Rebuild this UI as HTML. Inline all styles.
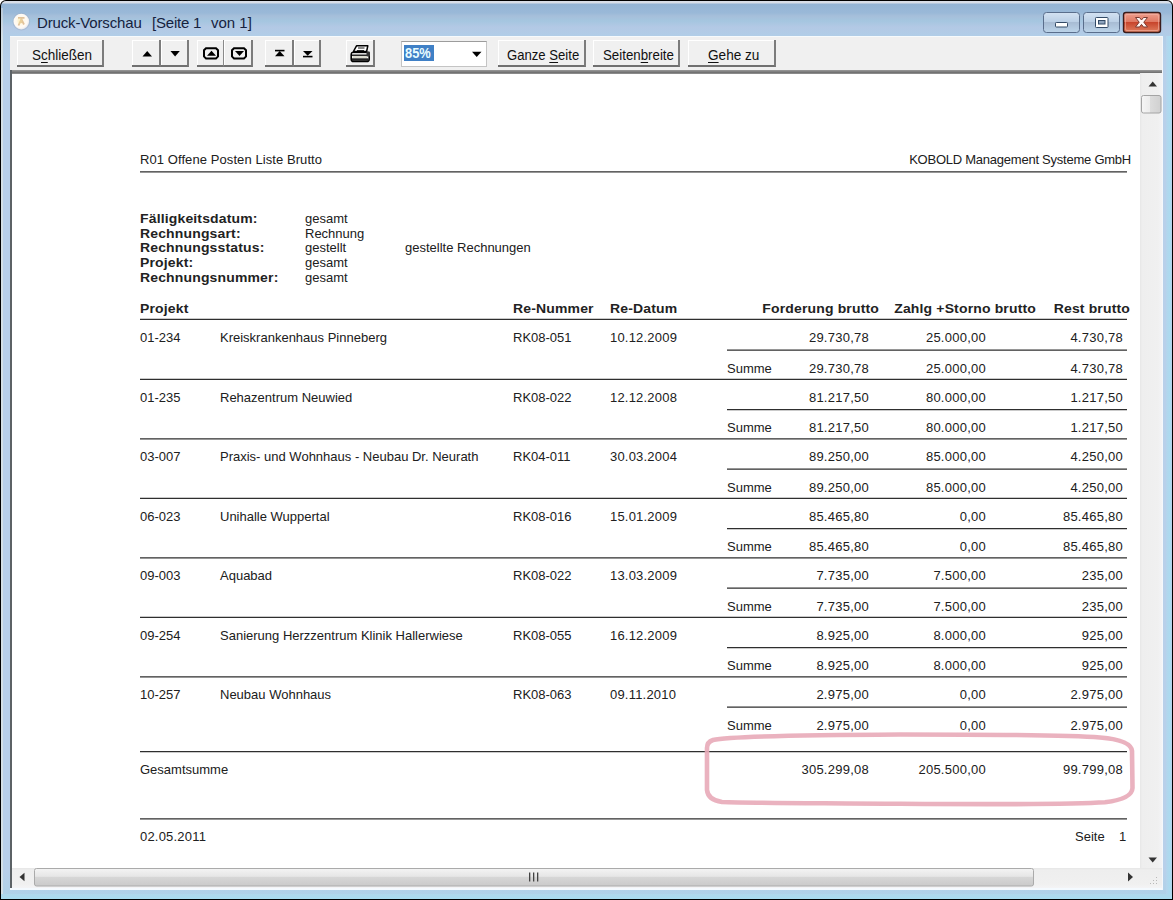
<!DOCTYPE html>
<html><head><meta charset="utf-8">
<style>
*{margin:0;padding:0;box-sizing:border-box}
html,body{width:1173px;height:900px;overflow:hidden;background:#fff}
body{position:relative;font-family:"Liberation Sans",sans-serif}
.a{position:absolute}
#frame{left:0;top:0;width:1173px;height:900px;background:#000;border-radius:6px 6px 0 0}
#frame2{left:1px;top:1px;width:1171px;height:898px;border-radius:5px 5px 0 0;background:linear-gradient(to bottom,#d8dee8 0px,#d8dee8 2px,#94b4d5 3px,#9ab9d8 12px,#a6bfda 15px,#a5c6e0 20px,#b3c9e5 26px,#b1cde7 34px,#b8d0ea 60px,#b8d0ea 870px,#add2e8 900px)}
#lstrip{left:1px;top:8px;width:2px;height:891px;background:linear-gradient(#b8c8d8,#d4e0e6 30px)}
#rstrip{left:1166px;top:36px;width:5px;height:863px;background:linear-gradient(to right,#b4d4ec,#a8dcf0)}
#bstrip{left:1px;top:894px;width:1171px;height:5px;background:linear-gradient(#b0d8ec,#a8dcf0)}
#title{left:37px;top:14px;font-size:15px;color:#16223e;white-space:pre;letter-spacing:-0.15px}
#client{left:10px;top:36px;width:1152px;height:853px;background:#f0f0f0}
#tbtop{left:10px;top:36px;width:1152px;height:1px;background:#f6fafc}
#tbline{left:10px;top:70px;width:1152px;height:3px;background:linear-gradient(#9a9a9a,#6a6a6a)}
#content{left:12px;top:73px;width:1128px;height:795px;background:#fff}
#ctop{left:12px;top:73px;width:1128px;height:1px;background:#8a8a8a}
#leftline{left:10px;top:70px;width:2px;height:818px;background:#5c6266}
#vscroll{left:1140px;top:73px;width:22px;height:795px;background:linear-gradient(to right,#e6e6e6,#eeeeee 2px,#f0f0f0 18px,#f4f4f6)}
#hscroll{left:12px;top:868px;width:1150px;height:20px;background:linear-gradient(#e6e6e6,#eeeeee 2px,#f0f0f0 16px,#f4f4f6)}
#bline{left:10px;top:888px;width:1152px;height:2px;background:#f4faff}
#rline{left:1162px;top:36px;width:1px;height:854px;background:#f4f8fc}
.btn{position:absolute;background:#f0f0f0;border-right:2px solid #7c7c7c;border-bottom:2px solid #707070;box-shadow:inset 1px 1px 0 #fff}
.bt{position:absolute;font-size:14px;color:#111;white-space:pre;line-height:16px;transform-origin:0 0}
.u{text-decoration:underline;text-underline-offset:2px}
.r{position:absolute;font-size:13px;color:#202020;white-space:pre;line-height:15px}
.b{font-weight:bold;font-size:13px;letter-spacing:0.15px;color:#222;transform:scaleX(1.075);transform-origin:0 0}
.b.n{transform-origin:100% 0}
.hl{position:absolute;height:1px;background:#2a2a2a}
.n{text-align:right}
</style></head><body>
<div id="frame" class="a"></div>
<div id="frame2" class="a"></div>
<div id="lstrip" class="a"></div>
<div id="rstrip" class="a"></div>
<div id="bstrip" class="a"></div>
<div id="title" class="a">Druck-Vorschau</div>
<div class="a" style="left:152px;top:14px;font-size:15px;color:#16223e;white-space:pre;letter-spacing:-0.2px">[Seite 1</div>
<div class="a" style="left:211px;top:14px;font-size:15px;color:#16223e;white-space:pre;letter-spacing:0px">von 1]</div>
<div id="client" class="a"></div>
<div id="tbtop" class="a"></div>
<div id="rline" class="a"></div>
<div id="tbline" class="a"></div>
<div id="content" class="a"></div>
<div id="ctop" class="a"></div>
<div id="leftline" class="a"></div>
<div id="vscroll" class="a"></div>
<div id="hscroll" class="a"></div>
<div id="bline" class="a"></div>

<div class="btn" style="left:17px;top:40px;width:87px;height:27px"></div>
<div class="bt" style="left:32px;top:47px;transform:scaleX(.965)">S<span class="u">c</span>hließen</div>
<div class="btn" style="left:132px;top:40px;width:29px;height:27px"></div>
<div class="btn" style="left:161px;top:40px;width:28px;height:27px"></div>
<div class="btn" style="left:197px;top:40px;width:27px;height:27px;border-right:1px solid #8a8a8a"></div>
<div class="btn" style="left:224px;top:40px;width:29px;height:27px"></div>
<div class="btn" style="left:265px;top:40px;width:29px;height:27px"></div>
<div class="btn" style="left:294px;top:40px;width:27px;height:27px"></div>
<div class="btn" style="left:346px;top:40px;width:29px;height:27px"></div>
<div class="a" style="left:401px;top:41px;width:86px;height:26px;background:#fff;border:1px solid #c4c4c4;border-top-color:#9c9c9c"></div>
<div class="a" style="left:404px;top:45px;width:30px;height:16px;background:#3f80c6"></div>
<div class="bt" style="left:405px;top:45px;color:#e8fcff;font-weight:bold;transform:scaleX(.92)">85%</div>
<div class="btn" style="left:498px;top:40px;width:88px;height:27px"></div>
<div class="bt" style="left:507px;top:47px;transform:scaleX(.937)">Ganze <span class="u">S</span>eite</div>
<div class="btn" style="left:593px;top:40px;width:87px;height:27px"></div>
<div class="bt" style="left:603px;top:47px;transform:scaleX(.949)">Seiten<span class="u">b</span>reite</div>
<div class="btn" style="left:688px;top:40px;width:88px;height:27px"></div>
<div class="bt" style="left:708px;top:47px;transform:scaleX(.972)"><span class="u">G</span>ehe zu</div>
<svg class="a" style="left:0;top:0" width="1173" height="900" viewBox="0 0 1173 900">
<g fill="#000">
<polygon points="142.5,56.5 147.2,51 152,56.5"/>
<polygon points="170.5,51 179.8,51 175.1,56.5"/>
<polygon points="207,55.8 211.5,50.8 216,55.8"/>
<polygon points="235,51 244,51 239.5,56"/>
<rect x="275" y="49.8" width="9.5" height="1.6"/>
<polygon points="275,56.2 279.7,51 284.5,56.2"/>
<rect x="303" y="55.8" width="9.5" height="1.6"/>
<polygon points="303,51 312.5,51 307.7,55.8"/>
<polygon points="472,51.8 481.5,51.8 476.7,57"/>
</g>
<g fill="none" stroke="#000" stroke-width="2">
<path d="M206,48.2 H216 L218,50.2 V56.4 L216,58.4 H206 L204,56.4 V50.2 Z"/>
<path d="M234,48.2 H244 L246,50.2 V56.4 L244,58.4 H234 L232,56.4 V50.2 Z"/>
</g>
<g>
<path d="M356.5,45.8 H367.8 L366.6,51.5 H353.4 Z" fill="#fff" stroke="#000" stroke-width="1.5" stroke-linejoin="round"/>
<rect x="358" y="47.2" width="6.5" height="1.6" fill="#707070"/>
<rect x="357" y="50.2" width="7" height="1.4" fill="#000"/>
<rect x="351.2" y="52.2" width="18" height="9.3" rx="2.6" fill="#fff" stroke="#000" stroke-width="1.6"/>
<rect x="352.2" y="53.2" width="16" height="1.4" fill="#d0d0d0"/>
<rect x="352" y="54.6" width="16.5" height="1.3" fill="#111"/>
<rect x="352.6" y="56" width="14.5" height="2.2" fill="#dcdcd0"/>
<rect x="352" y="58.3" width="16.5" height="2.6" fill="#222"/>
<rect x="366.5" y="51.5" width="3.5" height="5" rx="1" fill="#333"/>
</g>
</svg>

<div class="r" style="left:140px;top:152.0px;letter-spacing:0.08px">R01 Offene Posten Liste Brutto</div>
<div class="r n" style="left:731px;width:400px;top:152.0px;letter-spacing:-0.24px">KOBOLD Management Systeme GmbH</div>
<div class="r b" style="left:140px;top:210.7px">Fälligkeitsdatum:</div>
<div class="r" style="left:305px;top:210.7px">gesamt</div>
<div class="r b" style="left:140px;top:225.5px">Rechnungsart:</div>
<div class="r" style="left:305px;top:225.5px">Rechnung</div>
<div class="r b" style="left:140px;top:240.3px">Rechnungsstatus:</div>
<div class="r" style="left:305px;top:240.3px">gestellt</div>
<div class="r b" style="left:140px;top:255.1px">Projekt:</div>
<div class="r" style="left:305px;top:255.1px">gesamt</div>
<div class="r b" style="left:140px;top:269.9px">Rechnungsnummer:</div>
<div class="r" style="left:305px;top:269.9px">gesamt</div>
<div class="r" style="left:405px;top:240.3px">gestellte Rechnungen</div>
<div class="r b" style="left:140px;top:300.8px">Projekt</div>
<div class="r b" style="left:513px;top:300.8px">Re-Nummer</div>
<div class="r b" style="left:610px;top:300.8px">Re-Datum</div>
<div class="r b n" style="left:479px;width:400px;top:300.8px">Forderung brutto</div>
<div class="r b n" style="left:636px;width:400px;top:300.8px">Zahlg +Storno brutto</div>
<div class="r b n" style="left:730px;width:400px;top:300.8px">Rest brutto</div>
<div class="r" style="left:140px;top:330.2px">01-234</div>
<div class="r" style="left:220px;top:330.2px">Kreiskrankenhaus Pinneberg</div>
<div class="r" style="left:513px;top:330.2px">RK08-051</div>
<div class="r" style="left:610px;top:330.2px;letter-spacing:0.2px">10.12.2009</div>
<div class="r n" style="left:469px;width:400px;top:330.2px;letter-spacing:0.25px">29.730,78</div>
<div class="r n" style="left:586px;width:400px;top:330.2px;letter-spacing:0.25px">25.000,00</div>
<div class="r n" style="left:723px;width:400px;top:330.2px;letter-spacing:0.25px">4.730,78</div>
<div class="r" style="left:727px;top:360.5px">Summe</div>
<div class="r n" style="left:469px;width:400px;top:360.5px;letter-spacing:0.25px">29.730,78</div>
<div class="r n" style="left:586px;width:400px;top:360.5px;letter-spacing:0.25px">25.000,00</div>
<div class="r n" style="left:723px;width:400px;top:360.5px;letter-spacing:0.25px">4.730,78</div>
<div class="r" style="left:140px;top:389.7px">01-235</div>
<div class="r" style="left:220px;top:389.7px">Rehazentrum Neuwied</div>
<div class="r" style="left:513px;top:389.7px">RK08-022</div>
<div class="r" style="left:610px;top:389.7px;letter-spacing:0.2px">12.12.2008</div>
<div class="r n" style="left:469px;width:400px;top:389.7px;letter-spacing:0.25px">81.217,50</div>
<div class="r n" style="left:586px;width:400px;top:389.7px;letter-spacing:0.25px">80.000,00</div>
<div class="r n" style="left:723px;width:400px;top:389.7px;letter-spacing:0.25px">1.217,50</div>
<div class="r" style="left:727px;top:420.0px">Summe</div>
<div class="r n" style="left:469px;width:400px;top:420.0px;letter-spacing:0.25px">81.217,50</div>
<div class="r n" style="left:586px;width:400px;top:420.0px;letter-spacing:0.25px">80.000,00</div>
<div class="r n" style="left:723px;width:400px;top:420.0px;letter-spacing:0.25px">1.217,50</div>
<div class="r" style="left:140px;top:449.2px">03-007</div>
<div class="r" style="left:220px;top:449.2px">Praxis- und Wohnhaus - Neubau Dr. Neurath</div>
<div class="r" style="left:513px;top:449.2px">RK04-011</div>
<div class="r" style="left:610px;top:449.2px;letter-spacing:0.2px">30.03.2004</div>
<div class="r n" style="left:469px;width:400px;top:449.2px;letter-spacing:0.25px">89.250,00</div>
<div class="r n" style="left:586px;width:400px;top:449.2px;letter-spacing:0.25px">85.000,00</div>
<div class="r n" style="left:723px;width:400px;top:449.2px;letter-spacing:0.25px">4.250,00</div>
<div class="r" style="left:727px;top:479.5px">Summe</div>
<div class="r n" style="left:469px;width:400px;top:479.5px;letter-spacing:0.25px">89.250,00</div>
<div class="r n" style="left:586px;width:400px;top:479.5px;letter-spacing:0.25px">85.000,00</div>
<div class="r n" style="left:723px;width:400px;top:479.5px;letter-spacing:0.25px">4.250,00</div>
<div class="r" style="left:140px;top:508.7px">06-023</div>
<div class="r" style="left:220px;top:508.7px">Unihalle Wuppertal</div>
<div class="r" style="left:513px;top:508.7px">RK08-016</div>
<div class="r" style="left:610px;top:508.7px;letter-spacing:0.2px">15.01.2009</div>
<div class="r n" style="left:469px;width:400px;top:508.7px;letter-spacing:0.25px">85.465,80</div>
<div class="r n" style="left:586px;width:400px;top:508.7px;letter-spacing:0.25px">0,00</div>
<div class="r n" style="left:723px;width:400px;top:508.7px;letter-spacing:0.25px">85.465,80</div>
<div class="r" style="left:727px;top:539.0px">Summe</div>
<div class="r n" style="left:469px;width:400px;top:539.0px;letter-spacing:0.25px">85.465,80</div>
<div class="r n" style="left:586px;width:400px;top:539.0px;letter-spacing:0.25px">0,00</div>
<div class="r n" style="left:723px;width:400px;top:539.0px;letter-spacing:0.25px">85.465,80</div>
<div class="r" style="left:140px;top:568.2px">09-003</div>
<div class="r" style="left:220px;top:568.2px">Aquabad</div>
<div class="r" style="left:513px;top:568.2px">RK08-022</div>
<div class="r" style="left:610px;top:568.2px;letter-spacing:0.2px">13.03.2009</div>
<div class="r n" style="left:469px;width:400px;top:568.2px;letter-spacing:0.25px">7.735,00</div>
<div class="r n" style="left:586px;width:400px;top:568.2px;letter-spacing:0.25px">7.500,00</div>
<div class="r n" style="left:723px;width:400px;top:568.2px;letter-spacing:0.25px">235,00</div>
<div class="r" style="left:727px;top:598.5px">Summe</div>
<div class="r n" style="left:469px;width:400px;top:598.5px;letter-spacing:0.25px">7.735,00</div>
<div class="r n" style="left:586px;width:400px;top:598.5px;letter-spacing:0.25px">7.500,00</div>
<div class="r n" style="left:723px;width:400px;top:598.5px;letter-spacing:0.25px">235,00</div>
<div class="r" style="left:140px;top:627.7px">09-254</div>
<div class="r" style="left:220px;top:627.7px">Sanierung Herzzentrum Klinik Hallerwiese</div>
<div class="r" style="left:513px;top:627.7px">RK08-055</div>
<div class="r" style="left:610px;top:627.7px;letter-spacing:0.2px">16.12.2009</div>
<div class="r n" style="left:469px;width:400px;top:627.7px;letter-spacing:0.25px">8.925,00</div>
<div class="r n" style="left:586px;width:400px;top:627.7px;letter-spacing:0.25px">8.000,00</div>
<div class="r n" style="left:723px;width:400px;top:627.7px;letter-spacing:0.25px">925,00</div>
<div class="r" style="left:727px;top:658.0px">Summe</div>
<div class="r n" style="left:469px;width:400px;top:658.0px;letter-spacing:0.25px">8.925,00</div>
<div class="r n" style="left:586px;width:400px;top:658.0px;letter-spacing:0.25px">8.000,00</div>
<div class="r n" style="left:723px;width:400px;top:658.0px;letter-spacing:0.25px">925,00</div>
<div class="r" style="left:140px;top:687.2px">10-257</div>
<div class="r" style="left:220px;top:687.2px">Neubau Wohnhaus</div>
<div class="r" style="left:513px;top:687.2px">RK08-063</div>
<div class="r" style="left:610px;top:687.2px;letter-spacing:0.2px">09.11.2010</div>
<div class="r n" style="left:469px;width:400px;top:687.2px;letter-spacing:0.25px">2.975,00</div>
<div class="r n" style="left:586px;width:400px;top:687.2px;letter-spacing:0.25px">0,00</div>
<div class="r n" style="left:723px;width:400px;top:687.2px;letter-spacing:0.25px">2.975,00</div>
<div class="r" style="left:727px;top:717.5px">Summe</div>
<div class="r n" style="left:469px;width:400px;top:717.5px;letter-spacing:0.25px">2.975,00</div>
<div class="r n" style="left:586px;width:400px;top:717.5px;letter-spacing:0.25px">0,00</div>
<div class="r n" style="left:723px;width:400px;top:717.5px;letter-spacing:0.25px">2.975,00</div>
<div class="r" style="left:140px;top:762.4px">Gesamtsumme</div>
<div class="r n" style="left:469px;width:400px;top:762.4px;letter-spacing:0.25px">305.299,08</div>
<div class="r n" style="left:586px;width:400px;top:762.4px;letter-spacing:0.25px">205.500,00</div>
<div class="r n" style="left:723px;width:400px;top:762.4px;letter-spacing:0.25px">99.799,08</div>
<div class="r" style="left:140px;top:829.3px;letter-spacing:0.2px">02.05.2011</div>
<div class="r" style="left:1075px;top:829.3px">Seite</div>
<div class="r" style="left:1119px;top:829.3px">1</div>


<svg class="a" style="left:0;top:0" width="1173" height="900" viewBox="0 0 1173 900"><g stroke="#2e2e2e" stroke-width="1.3"><line x1="140" y1="171.9" x2="1127" y2="171.9"/><line x1="140" y1="319.4" x2="1127" y2="319.4"/><line x1="727" y1="350.1" x2="1127" y2="350.1"/><line x1="140" y1="379.3" x2="1127" y2="379.3"/><line x1="727" y1="409.6" x2="1127" y2="409.6"/><line x1="140" y1="438.8" x2="1127" y2="438.8"/><line x1="727" y1="469.1" x2="1127" y2="469.1"/><line x1="140" y1="498.3" x2="1127" y2="498.3"/><line x1="727" y1="528.6" x2="1127" y2="528.6"/><line x1="140" y1="557.8" x2="1127" y2="557.8"/><line x1="727" y1="588.1" x2="1127" y2="588.1"/><line x1="140" y1="617.3" x2="1127" y2="617.3"/><line x1="727" y1="647.6" x2="1127" y2="647.6"/><line x1="140" y1="676.8" x2="1127" y2="676.8"/><line x1="727" y1="707.1" x2="1127" y2="707.1"/><line x1="140" y1="751.6" x2="1127" y2="751.6"/><line x1="140" y1="818.8" x2="1127" y2="818.8"/></g></svg>
<svg class="a" style="left:0;top:0" width="1173" height="900" viewBox="0 0 1173 900">
<defs>
<linearGradient id="vth" x1="0" y1="0" x2="1" y2="0"><stop offset="0" stop-color="#f6f6f6"/><stop offset="0.42" stop-color="#ececec"/><stop offset="0.45" stop-color="#dcdcdc"/><stop offset="1" stop-color="#d0d0d0"/></linearGradient>
<linearGradient id="hth" x1="0" y1="0" x2="0" y2="1"><stop offset="0" stop-color="#f4f4f4"/><stop offset="0.45" stop-color="#e6e6e6"/><stop offset="0.5" stop-color="#d6d6d6"/><stop offset="1" stop-color="#cacaca"/></linearGradient>
<radialGradient id="ico" cx="0.45" cy="0.45" r="0.6"><stop offset="0" stop-color="#fff6e0"/><stop offset="0.7" stop-color="#fffaf4"/><stop offset="1" stop-color="#dfe4ee"/></radialGradient>
<linearGradient id="minb" x1="0" y1="0" x2="0" y2="1"><stop offset="0" stop-color="#d4e2f2"/><stop offset="0.45" stop-color="#bcd0e6"/><stop offset="0.5" stop-color="#a8bcd4"/><stop offset="1" stop-color="#bcd4ea"/></linearGradient>
<linearGradient id="clsb" x1="0" y1="0" x2="0" y2="1"><stop offset="0" stop-color="#f0a090"/><stop offset="0.45" stop-color="#e07a64"/><stop offset="0.5" stop-color="#c8452c"/><stop offset="1" stop-color="#e08060"/></linearGradient>
</defs>
<!-- vertical scrollbar -->
<polygon points="1148.5,86.5 1152.7,81.5 1157,86.5" fill="#333"/>
<rect x="1141.5" y="95.5" width="19.5" height="17.5" rx="2" fill="url(#vth)" stroke="#a4a4a4" stroke-width="1"/>
<polygon points="1148.5,857.5 1157,857.5 1152.7,862.5" fill="#333"/>
<!-- horizontal scrollbar -->
<polygon points="19.5,877 24.5,872.8 24.5,881.2" fill="#333"/>
<rect x="34.5" y="868.5" width="999" height="17.5" rx="2" fill="url(#hth)" stroke="#aaaaaa" stroke-width="1"/>
<rect x="529" y="872.5" width="1.3" height="9" fill="#444"/>
<rect x="533" y="872.5" width="1.3" height="9" fill="#444"/>
<rect x="537" y="872.5" width="1.3" height="9" fill="#444"/>
<polygon points="1128,872.5 1133,877 1128,881.5" fill="#333"/>
<g fill="#b8b8b8"><rect x="1156" y="877" width="1" height="1"/><rect x="1153" y="880" width="1" height="1"/><rect x="1156" y="880" width="1" height="1"/><rect x="1150" y="883" width="1" height="1"/><rect x="1153" y="883" width="1" height="1"/><rect x="1156" y="883" width="1" height="1"/></g>
<!-- app icon -->
<circle cx="21.3" cy="21.6" r="8.8" fill="#9aa8c0" opacity="0.45"/>
<circle cx="21.3" cy="21.6" r="7.8" fill="url(#ico)"/>
<path d="M18,17.8 L24.5,17.8 M21.3,17.8 L21.3,23 M21.2,19.5 L18.5,25.5 M21.5,19.5 L24,24.5" stroke="#c9955a" stroke-width="1.8" fill="none" opacity="0.55"/>
<ellipse cx="20" cy="21" rx="2.5" ry="3" fill="#f8e8a0" opacity="0.35"/>
<!-- caption buttons -->
<rect x="1043.5" y="12.5" width="36" height="20" rx="3" fill="url(#minb)" stroke="#5a6e8c" stroke-width="1"/>
<rect x="1083.5" y="12.5" width="36" height="20" rx="3" fill="url(#minb)" stroke="#5a6e8c" stroke-width="1"/>
<rect x="1123.5" y="12.5" width="37" height="20" rx="2.5" fill="url(#clsb)" stroke="#3a1c1c" stroke-width="1.4"/><rect x="1125.5" y="14.5" width="33" height="16" rx="1.5" fill="none" stroke="#f4b8a8" stroke-width="0.8" opacity="0.7"/>
<rect x="1055.5" y="22.5" width="12" height="4.5" rx="0.8" fill="#fff" stroke="#334a66" stroke-width="1"/>
<rect x="1095.5" y="17.5" width="12.5" height="10" rx="0.8" fill="#fff" stroke="#334a66" stroke-width="1"/>
<rect x="1098.5" y="20.5" width="6.5" height="3.5" fill="#8ea4be" stroke="#334a66" stroke-width="1"/>
<polygon points="1135.5,17.5 1139.5,17.5 1141.5,20 1143.5,17.5 1147.5,17.5 1143.8,22.2 1147.5,27 1143.5,27 1141.5,24.4 1139.5,27 1135.5,27 1139.2,22.2" fill="#fff6f4" stroke="#7a3a30" stroke-width="1" stroke-linejoin="round"/>
<!-- pink annotation -->
<path d="M707,790 L707,748 Q707,742 713,740 C730,736 800,735 900,734.5 C1000,734.5 1070,735 1100,737.5 Q1131,740 1132,751 L1132.5,788 Q1132,799 1105,802.3 C1080,804 1000,804.5 900,803.8 C800,803 750,803 722,802 Q708,800 707,790 Z" fill="none" stroke="#e8aab8" stroke-width="4.6" opacity="0.9"/>
</svg>

</body></html>
